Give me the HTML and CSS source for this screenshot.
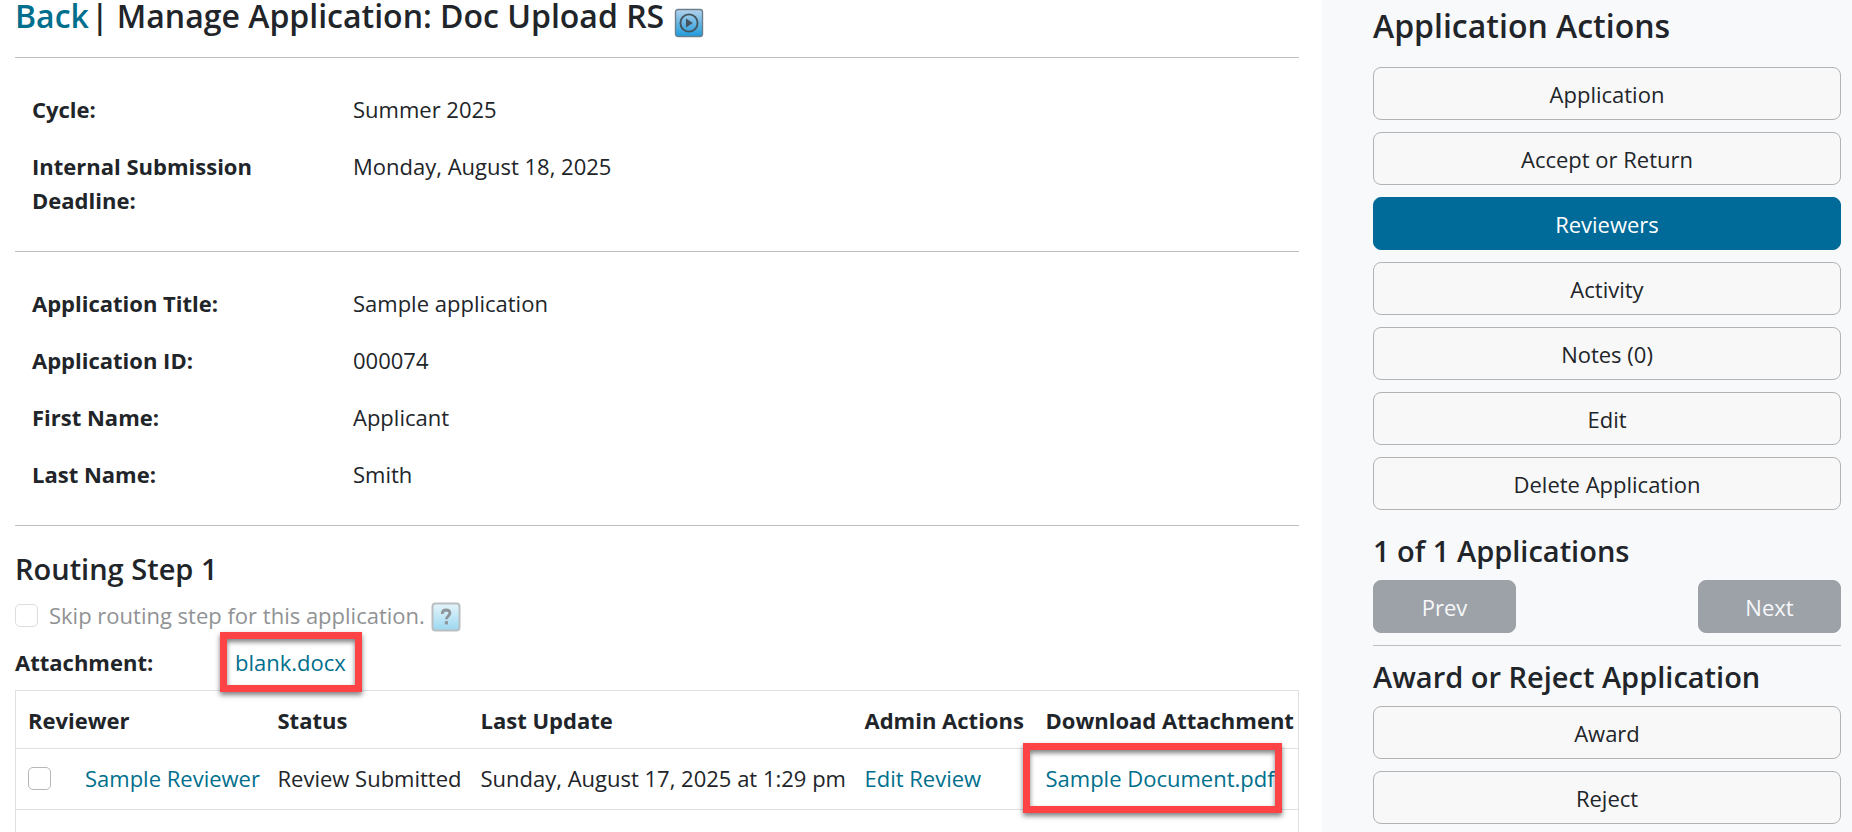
FILE: index.html
```html
<!DOCTYPE html>
<html lang="en">
<head>
<meta charset="utf-8">
<title>Manage Application: Doc Upload RS</title>
<meta name="viewport" content="width=device-width, initial-scale=1">
<link rel="stylesheet" href="styles.css">
</head>
<body>
<div class="page">
  <main class="main">
    <header class="title-bar">
      <h1 class="title"><a href="#">Back</a>| Manage Application: Doc Upload RS</h1>
      <button type="button" class="icon-button" aria-label="Play tutorial">
        <svg width="30" height="30" viewBox="0 0 30 30" aria-hidden="true">
          <defs><linearGradient id="play-fill" x1="0" y1="0" x2="0" y2="1"><stop offset="0" stop-color="#b5d3ec"/><stop offset="1" stop-color="#1c9bdc"/></linearGradient></defs>
          <rect x="1.5" y="1.5" width="27" height="27" rx="2.5" fill="url(#play-fill)" stroke="#6c7f8c" stroke-width="1.4"/>
          <circle cx="15" cy="15" r="8.6" fill="none" stroke="#46535c" stroke-width="1.9"/>
          <path d="M12 10.5v9l6.8-4.500z" fill="#46535c"/>
        </svg>
      </button>
    </header>

    <dl class="details">
      <dt>Cycle:</dt><dd>Summer 2025</dd>
      <dt>Internal Submission Deadline:</dt><dd>Monday, August 18, 2025</dd>
    </dl>
    <dl class="details">
      <dt>Application Title:</dt><dd>Sample application</dd>
      <dt>Application ID:</dt><dd>000074</dd>
      <dt>First Name:</dt><dd>Applicant</dd>
      <dt>Last Name:</dt><dd>Smith</dd>
    </dl>

    <section class="routing">
      <h2 class="subtitle">Routing Step 1</h2>
      <div class="skip">
        <input type="checkbox" class="check" id="skip" disabled>
        <label for="skip">Skip routing step for this application.</label>
        <button type="button" class="icon-button help" aria-label="Help">
          <svg width="30" height="30" viewBox="0 0 30 30" aria-hidden="true">
            <defs><linearGradient id="help-fill" x1="0" y1="0" x2="0" y2="1"><stop offset="0" stop-color="#e6f5fb"/><stop offset="1" stop-color="#9bd7f0"/></linearGradient></defs>
            <rect x="1.5" y="1.500" width="27" height="27" rx="3" fill="url(#help-fill)" stroke="#b9bec1" stroke-width="2"/>
            <path d="M11.300 12c0-2.600 1.600-4 3.800-4s3.800 1.300 3.800 3.300c0 2.900-3.500 2.800-3.500 6" fill="none" stroke="#8d9599" stroke-width="2.800"/>
            <rect x="13.800" y="19.200" width="3.200" height="3.200" fill="#8d9599"/>
          </svg>
        </button>
      </div>
      <div class="attachment">
        <span class="attachment-label">Attachment:</span>
        <span class="marked marked-file"><a href="#">blank.docx</a></span>
      </div>
      <table class="reviewers">
        <colgroup><col class="col-reviewer"><col class="col-status"><col class="col-update"><col class="col-admin"><col class="col-download"></colgroup>
        <thead>
          <tr><th>Reviewer</th><th>Status</th><th>Last Update</th><th>Admin Actions</th><th>Download Attachment</th></tr>
        </thead>
        <tbody>
          <tr>
            <td><span class="reviewer"><input type="checkbox" class="check" aria-label="Select Sample Reviewer"><a href="#">Sample Reviewer</a></span></td>
            <td>Review Submitted</td>
            <td>Sunday, August 17, 2025 at 1:29 pm</td>
            <td><a href="#">Edit Review</a></td>
            <td><span class="marked marked-download"><a href="#">Sample Document.pdf</a></span></td>
          </tr>
          <tr class="spare"><td colspan="5"></td></tr>
        </tbody>
      </table>
    </section>
  </main>

  <aside class="side">
    <h2 class="side-title">Application Actions</h2>
    <nav class="actions">
      <button type="button" class="btn">Application</button>
      <button type="button" class="btn">Accept or Return</button>
      <button type="button" class="btn active">Reviewers</button>
      <button type="button" class="btn">Activity</button>
      <button type="button" class="btn">Notes (0)</button>
      <button type="button" class="btn">Edit</button>
      <button type="button" class="btn">Delete Application</button>
    </nav>
    <h3 class="subtitle">1 of 1 Applications</h3>
    <div class="pager">
      <button type="button" class="btn step" disabled>Prev</button>
      <button type="button" class="btn step" disabled>Next</button>
    </div>
    <section class="decision">
      <h3 class="subtitle">Award or Reject Application</h3>
      <div class="actions">
        <button type="button" class="btn">Award</button>
        <button type="button" class="btn">Reject</button>
      </div>
    </section>
  </aside>
</div>
</body>
</html>
```
FILE: styles.css
```css
* { box-sizing: border-box; }
body {
  margin: 0;
  background: #fff;
  color: #212529;
  font: 22px/34px "Segoe UI", "Open Sans", "Noto Sans", sans-serif;
}
h1, h2, h3, dl, dd { margin: 0; }
a { color: #006f8d; text-decoration: none; }
button, input { font: inherit; margin: 0; }

.page { display: flex; height: 100vh; overflow: hidden; }
.main { flex: 1; min-width: 0; padding: 0 23px 0 15px; }
.side { flex: 0 0 530px; padding: 4px 11px 0 51px; background: #f8f9fb; }

.title-bar {
  display: flex;
  align-items: flex-start;
  gap: 4px;
  height: 58px;
  border-bottom: 1px solid #bcbebf;
}
.title { font-size: 32px; line-height: 32px; font-weight: 600; }
.title a { margin-right: 2px; }
.icon-button {
  display: block;
  padding: 0;
  border: 0;
  background: none;
  line-height: 0;
}
.title-bar .icon-button { margin: 8px 0 0 6px; }

.details {
  display: grid;
  grid-template-columns: 1fr 3fr;
  row-gap: 23px;
  padding: 34px 0;
  border-bottom: 1px solid #bcbebf;
}
.details dt, .details dd { padding: 0 17px; }
.details dt { font-weight: 700; }

.subtitle { font-size: 29px; line-height: 36px; font-weight: 600; }
.routing { padding-top: 25px; }
.check {
  appearance: none;
  flex: none;
  width: 23px;
  height: 23px;
  border: 1px solid #b5b8ba;
  border-radius: 5px;
  background: #fff;
}
.check:disabled { border-color: #dcdddf; }
.skip {
  display: flex;
  align-items: center;
  height: 34px;
  margin-top: 11px;
  color: #909294;
}
.skip label { margin-left: 11px; }
.help { margin: 4px 0 0 6px; }

.attachment { display: flex; margin: 13px 0 11px; }
.attachment-label { width: 220px; font-weight: 700; }

.marked { position: relative; }
.marked::after {
  content: "";
  position: absolute;
  border: 7px solid #fd4345;
  box-shadow: 0 3px 5px rgba(0, 0, 0, .5), inset 0 3px 5px rgba(0, 0, 0, .5);
  pointer-events: none;
}
.marked-file::after { inset: -13px -16px -13px -15px; }
.marked-download::after { inset: -20px -7px -20px -23px; }

.reviewers {
  width: 100%;
  table-layout: fixed;
  border-collapse: collapse;
  border: 1px solid #dee0e3;
}
.col-reviewer { width: 250px; }
.col-status { width: 203px; }
.col-update { width: 384px; }
.col-admin { width: 181px; }
.reviewers th, .reviewers td {
  padding: 12px 0 11px 12px;
  text-align: left;
  white-space: nowrap;
  border-bottom: 1px solid #dee0e3;
}
.reviewers td { padding: 12px 0 14px 12px; }
.reviewer { display: flex; align-items: center; gap: 34px; }
.spare td { height: 60px; }

.side-title { font-size: 32px; line-height: 44px; font-weight: 600; }
.actions { display: flex; flex-direction: column; gap: 12px; }
.btn {
  height: 53px;
  padding: 0 12px;
  border: 1px solid #b1b3b5;
  border-radius: 8px;
  background: #f8f8f8;
  color: #212529;
  text-align: center;
}
.btn.active { background: #006a99; border-color: #006a99; color: #fff; }
.side-title + .actions { margin: 19px 0 23px; }
.pager {
  display: flex;
  justify-content: space-between;
  padding: 11px 0 12px;
  border-bottom: 1px solid #bcbebf;
}
.step { width: 143px; background: #9da2a9; border-color: #9da2a9; color: #f7f8f9; }
.decision { padding-top: 13px; }
.decision .actions { margin-top: 11px; }
```
